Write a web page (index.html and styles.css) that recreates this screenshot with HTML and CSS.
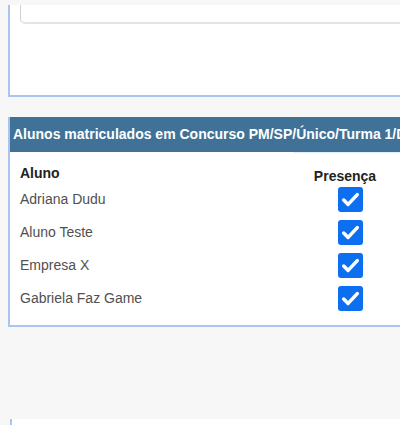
FILE: index.html
```html
<html>
<head>
  <title>Presença</title>
  <meta name="viewport" content="width=device-width, initial-scale=1.0">
  <link rel="stylesheet" href="styles.css">
</head>
<body>
  <div class="top-strip"></div>

  <div class="panel panel-form">
    <div class="text-box"></div>
  </div>

  <div class="panel panel-alunos">
    <div class="panel-heading">Alunos matriculados em Concurso PM/SP/Único/Turma 1/Diurno</div>
    <table class="alunos">
      <thead>
        <tr>
          <th class="col-aluno">Aluno</th>
          <th class="col-presenca">Presença</th>
          <th class="col-extra"></th>
        </tr>
      </thead>
      <tbody>
        <tr>
          <td>Adriana Dudu</td>
          <td class="check-cell"><span class="check"><svg viewBox="0 0 24 24"><path d="M5.5 12.5l4.2 4.2 8.8-9.4"/></svg></span></td>
          <td></td>
        </tr>
        <tr>
          <td>Aluno Teste</td>
          <td class="check-cell"><span class="check"><svg viewBox="0 0 24 24"><path d="M5.5 12.5l4.2 4.2 8.8-9.4"/></svg></span></td>
          <td></td>
        </tr>
        <tr>
          <td>Empresa X</td>
          <td class="check-cell"><span class="check"><svg viewBox="0 0 24 24"><path d="M5.5 12.5l4.2 4.2 8.8-9.4"/></svg></span></td>
          <td></td>
        </tr>
        <tr>
          <td>Gabriela Faz Game</td>
          <td class="check-cell"><span class="check"><svg viewBox="0 0 24 24"><path d="M5.5 12.5l4.2 4.2 8.8-9.4"/></svg></span></td>
          <td></td>
        </tr>
      </tbody>
    </table>
  </div>

  <div class="panel panel-next"></div>
</body>
</html>
```

FILE: styles.css
```css
body {
  margin: 0;
  background: #f7f7f7;
  font-family: "Liberation Sans", Arial, sans-serif;
  overflow: hidden;
  width: 400px;
  height: 425px;
}
.top-strip {
  height: 5px;
}
.panel {
  width: 700px;
  margin-left: 8px;
  background: white;
  border-left: 2px solid #a9c5ee;
  border-bottom: 2px solid #a9c5ee;
}
.panel-form {
  height: 90px;
  padding-left: 10px;
  box-sizing: content-box;
}
.text-box {
  height: 17px;
  border: 1px solid #d2d2d2;
  border-top: none;
  border-bottom: 2px solid #e4e4e4;
  border-radius: 0 0 5px 5px;
}
.panel-alunos {
  margin-top: 20px;
  padding-bottom: 10px;
}
.panel-heading {
  height: 35px;
  line-height: 34px;
  background: #407297;
  color: white;
  font-weight: bold;
  font-size: 14px;
  padding-left: 3px;
  white-space: nowrap;
  overflow: hidden;
}
.alunos {
  border-collapse: collapse;
  font-size: 14px;
  color: #505050;
}
.alunos th {
  font-weight: bold;
  color: #222;
  height: 30px;
  vertical-align: bottom;
  padding: 0;
  border-top: 1px solid #fff;
}
.alunos th.col-presenca,
.alunos th.col-extra {
  border-top-color: #e3ecf8;
}
.col-aluno {
  width: 273px;
  text-align: left;
  padding: 0 0 2px 10px !important;
}
.col-presenca {
  width: 104px;
  text-align: center;
  position: relative;
  top: 1px;
}
.col-extra {
  width: 300px;
}
.alunos td {
  height: 33px;
  padding: 0;
  vertical-align: middle;
}
.alunos td:first-child {
  padding-left: 10px;
}
.check-cell {
  padding-left: 45px !important;
}
.check {
  display: block;
  width: 25px;
  height: 25px;
  background: #0b6ff0;
  border-radius: 3px;
}
.check svg {
  display: block;
  width: 25px;
  height: 25px;
  fill: none;
  stroke: white;
  stroke-width: 3.4;
  stroke-linecap: round;
  stroke-linejoin: round;
}
.panel-next {
  margin-top: 92px;
  margin-left: 10px;
  height: 40px;
  border-bottom: none;
}
```
